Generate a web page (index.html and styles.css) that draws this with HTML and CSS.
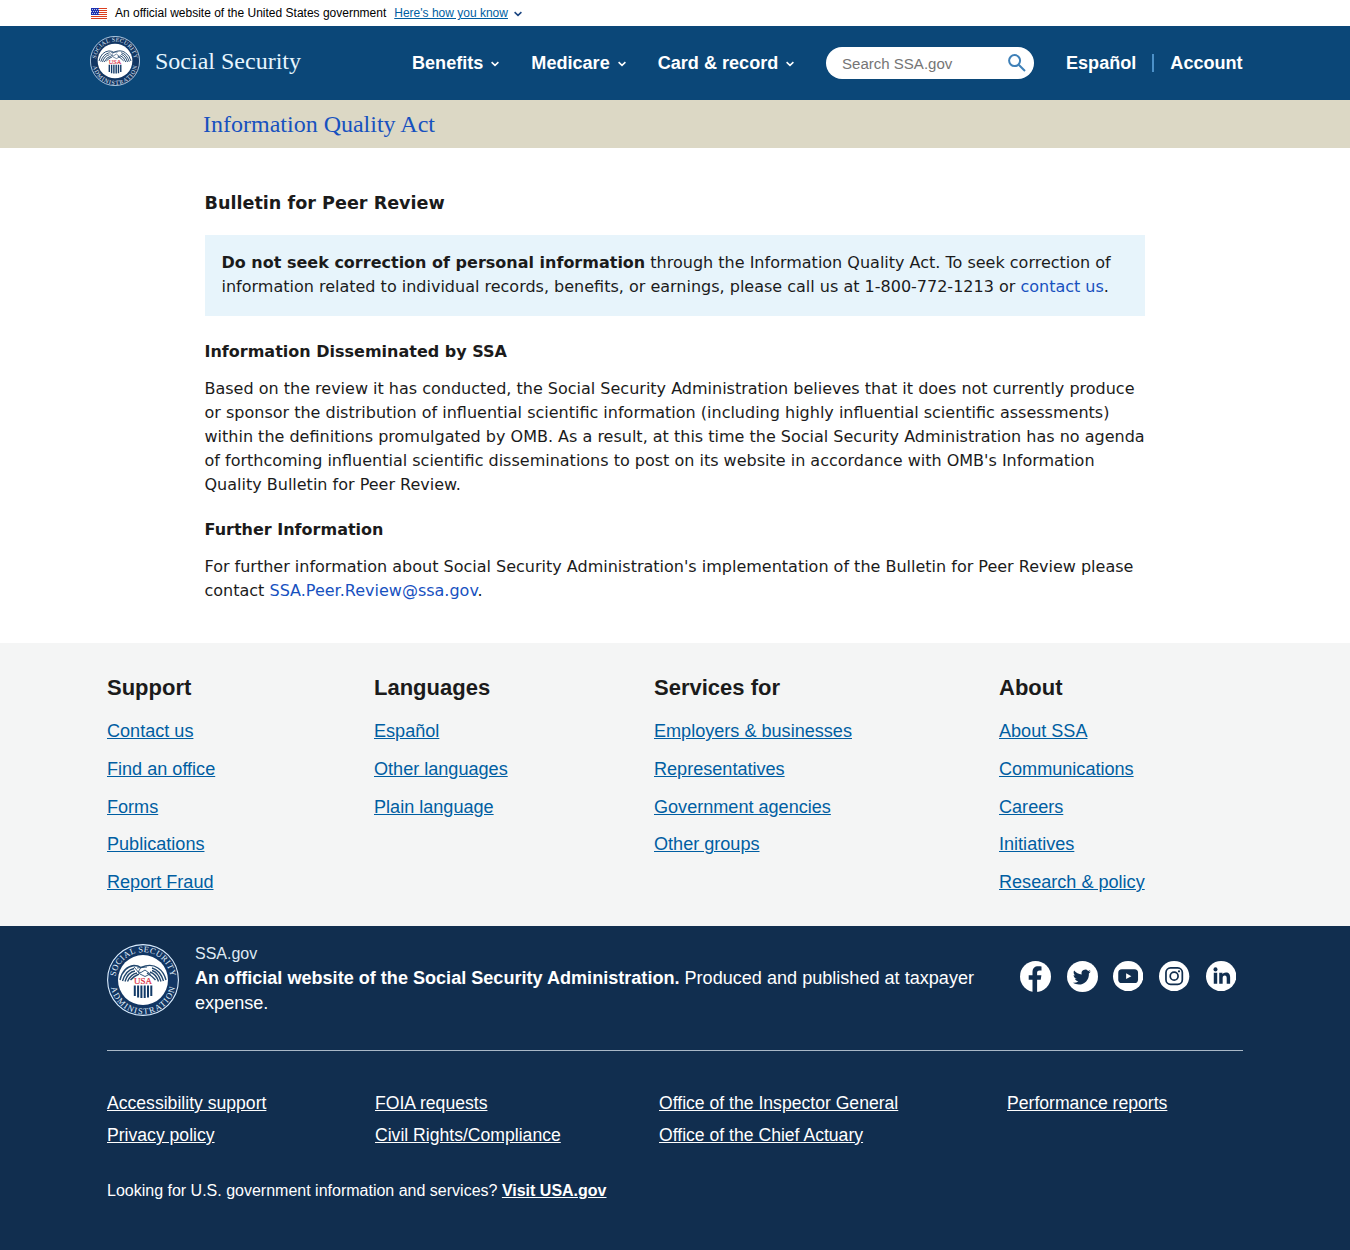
FILE: index.html
```html
<!DOCTYPE html>
<html lang="en">
<head>
<meta charset="utf-8">
<title>Information Quality Act | SSA</title>
<link rel="stylesheet" href="styles.css">
</head>
<body>
<svg class="defs" width="0" height="0" aria-hidden="true">
  <defs>
    <path id="arc-top" d="M-27.300 3A27.500 27.500 0 1 1 27.300 3"/>
    <path id="arc-bottom" d="M-32.300-2A32.500 32.500 0 1 0 32.300-2"/>
    <symbol id="seal" viewBox="-36 -36 72 72">
      <circle r="35.400" class="seal-ring"/>
      <circle r="25" fill="#fff"/>
      <text class="seal-text"><textPath href="#arc-top" startOffset="50%" textLength="80">SOCIAL SECURITY</textPath></text>
      <text class="seal-text"><textPath href="#arc-bottom" startOffset="50%" textLength="90">ADMINISTRATION</textPath></text>
      <path class="feather" d="M-23 0Q-20-13-9-14.500-5-14.500-2-12.500Q8-17 15-12 21-8 23 0M-20.500 1Q-17-10-9-11.500M-18 1.500Q-15-8-8-9M-15.500 1.500Q-12-6-6-7M-12.500 0Q-9-4-4-6M20.500 1Q17-10 9-12M18 1.500Q15-8 9-9.500M15.500 1.500Q13-6 7-8M12.500 0Q9-4 4-7"/>
      <path class="hands" d="M-9-13-3-6 2-3.500 6-5.500M-2-12.500-5-8-2-7.500 2-10 8-5.500M-6-12-2-12.500 4-13"/>
      <text class="seal-usa" y="4.200" textLength="18">USA</text>
      <path class="stripe" d="M-8.200 5.500V16M-4.900 5.500V17.500M-1.600 5.500V18M1.700 5.500V18M5 5.500V17.500M8.300 5.500V16"/>
    </symbol>
    <symbol id="chevron" viewBox="0 0 8 6"><path d="M.6 1.100 4 4.400 7.400 1.100" fill="none" stroke="currentColor" stroke-width="1.500"/></symbol>
  </defs>
</svg>

<div class="gov-banner">
  <svg class="flag" viewBox="0 0 16 11"><path fill="#fff" d="M0 0h16v11H0z"/><path stroke="#db3e1f" d="M0 .5h16M0 2.500h16M0 4.500h16M0 6.500h16M0 8.500h16M0 10.500h16"/><path fill="#1e33b1" d="M0 0h8v7H0z"/><path stroke="#fff" stroke-dasharray="1 1" stroke-width=".7" d="M1 1.500h7M0 3.500h8M1 5.500h7"/></svg>
  <span>An official website of the United States government</span>
  <a href="#">Here's how you know</a>
  <svg class="chevron banner-chevron"><use href="#chevron"/></svg>
</div>

<header class="site-header">
  <svg class="header-seal"><use href="#seal"/></svg>
  <span class="site-name">Social Security</span>
  <nav class="main-nav">
    <a href="#">Benefits <svg class="chevron"><use href="#chevron"/></svg></a>
    <a href="#">Medicare <svg class="chevron"><use href="#chevron"/></svg></a>
    <a href="#">Card &amp; record <svg class="chevron"><use href="#chevron"/></svg></a>
  </nav>
  <div class="search"><span>Search SSA.gov</span>
    <svg viewBox="0 0 18 18"><circle cx="6.600" cy="6.600" r="5.500"/><path d="M10.700 10.700 17 17"/></svg>
  </div>
  <a class="espanol" href="#">Español</a>
  <a class="account" href="#">Account</a>
</header>

<div class="title-bar"><a href="#">Information Quality Act</a></div>

<main class="content">
  <h1>Bulletin for Peer Review</h1>
  <div class="notice"><strong>Do not seek correction of personal information</strong> through the Information Quality Act. To seek correction of information related to individual records, benefits, or earnings, please call us at 1-800-772-1213 or <a href="#">contact us</a>.</div>
  <h2>Information Disseminated by SSA</h2>
  <p>Based on the review it has conducted, the Social Security Administration believes that it does not currently produce or sponsor the distribution of influential scientific information (including highly influential scientific assessments) within the definitions promulgated by OMB. As a result, at this time the Social Security Administration has no agenda of forthcoming influential scientific disseminations to post on its website in accordance with OMB's Information Quality Bulletin for Peer Review.</p>
  <h2>Further Information</h2>
  <p>For further information about Social Security Administration's implementation of the Bulletin for Peer Review please contact <a href="#">SSA.Peer.Review@ssa.gov</a>.</p>
</main>

<footer>
  <div class="footer-nav">
    <section><h3>Support</h3><a href="#">Contact us</a><a href="#">Find an office</a><a href="#">Forms</a><a href="#">Publications</a><a href="#">Report Fraud</a></section>
    <section><h3>Languages</h3><a href="#">Español</a><a href="#">Other languages</a><a href="#">Plain language</a></section>
    <section><h3>Services for</h3><a href="#">Employers &amp; businesses</a><a href="#">Representatives</a><a href="#">Government agencies</a><a href="#">Other groups</a></section>
    <section><h3>About</h3><a href="#">About SSA</a><a href="#">Communications</a><a href="#">Careers</a><a href="#">Initiatives</a><a href="#">Research &amp; policy</a></section>
  </div>
  <div class="footer-dark">
    <div class="identity">
      <svg class="footer-seal"><use href="#seal"/></svg>
      <div class="identity-text">
        <div class="domain">SSA.gov</div>
        <div><strong>An official website of the Social Security Administration.</strong> Produced and published at taxpayer expense.</div>
      </div>
      <div class="social">
        <svg class="big" viewBox="0 0 31 31"><circle cx="15.500" cy="15.500" r="15.500" fill="#fff"/><path d="M12.500 31V18.700H8.700v-4.500h3.800v-3.100c0-4 2.300-5.900 5.700-5.900 1.300 0 2.500.2 3.300.3v4h-2c-1.900 0-2.400 1-2.400 2.300v2.400h4.300l-.7 4.500h-3.600V31z"/></svg>
        <svg class="big" viewBox="0 0 31 31"><circle cx="15.500" cy="15.500" r="15.500" fill="#fff"/><path d="M23.800 10.500c-.7.3-1.300.5-2 .6.7-.5 1.300-1.200 1.600-2-.7.4-1.500.7-2.300.9a3.700 3.700 0 0 0-6.400 3.400c-3-.2-5.800-1.600-7.600-3.900-.9 1.700-.5 3.800 1.200 4.900-.6 0-1.200-.2-1.700-.5 0 1.800 1.300 3.300 3 3.700-.6.2-1.100.2-1.700.1.500 1.500 1.800 2.500 3.500 2.600a7.500 7.500 0 0 1-5.500 1.500c8 4.700 16.500-.8 16-9.400.7-.5 1.400-1.200 1.900-1.900z"/></svg>
        <svg viewBox="0 0 30 30"><circle cx="15" cy="15" r="15" fill="#fff"/><rect x="5.200" y="8.200" width="19.600" height="13.600" rx="3.600"/><path d="m13 12.200 5.200 2.800-5.200 2.800z" fill="#fff"/></svg>
        <svg viewBox="0 0 30 30"><circle cx="15" cy="15" r="15" fill="#fff"/><g fill="none" stroke="#112e4f" stroke-width="1.700"><rect x="6.900" y="6.900" width="16.200" height="16.200" rx="4.600"/><circle cx="15" cy="15" r="3.900"/></g><circle cx="19.800" cy="10.200" r="1.100"/></svg>
        <svg viewBox="0 0 30 30"><circle cx="15" cy="15" r="15" fill="#fff"/><circle cx="9.400" cy="8.300" r="2"/><path d="M7.700 11.700h3.400v10.800H7.700zM13.100 11.700h3.200v1.500c.7-1.100 1.800-1.800 3.400-1.800 3.200 0 4.200 2 4.200 5v6.100h-3.400v-5.500c0-1.700-.5-2.700-1.900-2.700-1.500 0-2.100 1.100-2.100 2.700v5.500h-3.400z"/></svg>
      </div>
    </div>
    <div class="legal">
      <div><a href="#">Accessibility support</a><a href="#">Privacy policy</a></div>
      <div><a href="#">FOIA requests</a><a href="#">Civil Rights/Compliance</a></div>
      <div><a href="#">Office of the Inspector General</a><a href="#">Office of the Chief Actuary</a></div>
      <div><a href="#">Performance reports</a></div>
    </div>
    <p class="usa">Looking for U.S. government information and services? <a href="#">Visit USA.gov</a></p>
  </div>
</footer>
</body>
</html>
```
FILE: styles.css
```css
* { box-sizing: border-box; }
body { margin: 0; background: #fff; color: #1b1b1b; font-family: "Liberation Sans", Arial, sans-serif; }
svg { display: block; flex: none; }
.defs { position: absolute; }
.seal-ring { fill: #123663; stroke: #dceeff; stroke-width: 1.100; }
.header-seal .seal-ring, .header-seal { stroke-width: 2; }
.seal-text { font: 8.500px "Liberation Serif", serif; fill: #e4f3ff; stroke: none; text-anchor: middle; }
.seal-usa { font: 9px "Liberation Serif", serif; fill: #dd2c3e; stroke: #dd2c3e; stroke-width: .2; text-anchor: middle; }
.feather { fill: none; stroke: #24496f; stroke-width: 1.400; }
.hands { fill: none; stroke: #24496f; stroke-width: .9; }
.stripe { fill: none; stroke: #123a68; stroke-width: 2; }
.chevron { width: 8px; height: 6px; }

.gov-banner { display: flex; align-items: center; height: 26px; padding-left: 91px; font-size: 12px; color: #000; }
.flag { width: 16px; height: 11px; margin-right: 8px; }
.gov-banner a { margin-left: 8px; color: #005ea2; }
.banner-chevron { margin: 2px 0 0 6px; color: #1a4480; }

.site-header { display: flex; height: 74px; padding-left: 90px; background: #0b4778; color: #fff; }
.header-seal { width: 50px; height: 50px; margin-top: 10px; }
.site-name { width: 257px; margin: 21px 0 0 15px; font: 24px/28px "Liberation Serif", "Times New Roman", serif; color: #e7f6ff; }
.site-header a { font-size: 18.080px; font-weight: 700; line-height: 22px; color: #fff; text-decoration: none; white-space: nowrap; }
.main-nav { display: flex; gap: 32px; width: 414px; margin-top: 26px; }
.main-nav a { display: flex; align-items: center; gap: 8px; height: 22px; }
.main-nav .chevron { margin-top: 1px; }
.search { display: flex; justify-content: space-between; width: 208px; height: 32px; margin-top: 21px; padding: 7px 8px 0 16px; border-radius: 16px; background: #fff; font-size: 15.040px; line-height: 20px; color: #757575; }
.search svg { width: 18px; height: 18px; fill: none; stroke: #3e80b8; stroke-width: 2; }
.site-header .espanol { margin: 26px 0 0 32px; }
.site-header .account { height: 18px; margin: 28px 0 0 16px; padding-left: 16px; border-left: 2px solid #4c91c9; line-height: 18px; }

.title-bar { height: 48px; padding: 10px 0 0 203px; background: #dcd8c5; font: 24px/28px "Liberation Serif", "Times New Roman", serif; }
.title-bar a, .content a { color: #1751bf; text-decoration: none; }

.content { width: 940.500px; height: 495px; margin-left: 204.500px; padding-top: 42px; font: 16px/24px "DejaVu Sans", sans-serif; }
.content h1 { margin: 0 0 19px; font-size: 17.600px; line-height: 26px; }
.content h2 { margin: 21px 0 13px; font-size: 16px; line-height: 24px; }
.content p { margin: 0 0 21px; }
.notice { height: 81px; margin-bottom: 24px; padding: 16px 17px; background: #e7f4fb; }

.footer-nav { display: grid; grid-template-columns: 267px 280px 345px auto; height: 283px; padding: 31px 0 0 107px; background: #f4f5f5; }
.footer-nav section { display: flex; flex-direction: column; align-items: flex-start; gap: 15.750px; font-size: 18.080px; line-height: 22px; }
.footer-nav h3 { margin: 0 0 2.400px; font-size: 22px; line-height: 28px; }
.footer-nav a { color: #005ea2; }

.footer-dark { height: 324px; padding: 18px 107px 0; background: #112e4f; color: #fff; }
.identity { display: flex; height: 107px; border-bottom: 1px solid #a9b8c7; }
.footer-seal { width: 72px; height: 72px; margin-right: 16px; }
.identity-text { width: 801px; font-size: 18.080px; line-height: 25px; }
.domain { height: 22px; font-size: 16px; line-height: 20px; color: #dfe9f3; }
.social { display: flex; gap: 16.200px; margin: 17px 0 0 24px; }
.social svg { width: 30.300px; height: 30.300px; fill: #112e4f; }
.social svg.big { width: 31px; height: 31px; margin-right: -.700px; }
.legal { display: grid; grid-template-columns: 268px 284px 348px auto; margin-top: 36px; font-size: 17.600px; line-height: 32px; white-space: nowrap; }
.legal div { display: flex; flex-direction: column; align-items: flex-start; }
.footer-dark a { color: #fff; }
.usa { margin: 29px 0 0; font-size: 16px; line-height: 22px; }
.usa a { font-weight: 700; }
```
